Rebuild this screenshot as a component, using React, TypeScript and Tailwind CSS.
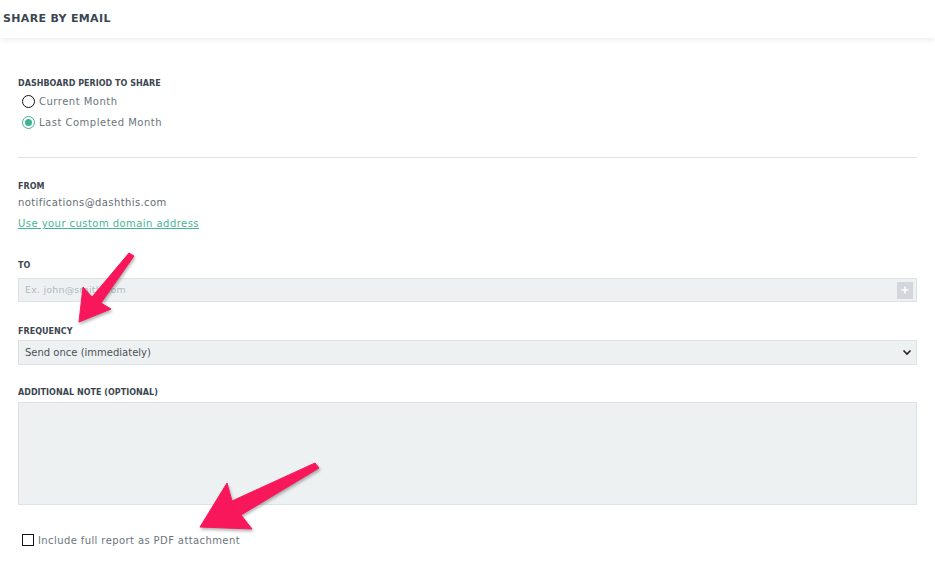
import React, { useState } from "react";

const font = { fontFamily: "'DejaVu Sans', sans-serif" };

const Label = ({ children, className = "" }: { children: React.ReactNode; className?: string }) => (
    <div className={`text-[8px] leading-[12px] font-bold tracking-[0.005em] text-[#3b4650] ${className}`}>
        {children}
    </div>
);

const Radio = ({ checked, label, onClick }: { checked: boolean; label: string; onClick: () => void }) => (
    <button onClick={onClick} className="flex items-center h-[21px] pl-[4px] gap-[4px] text-left">
        {checked ? (
            <span className="w-[13px] h-[13px] rounded-full border-[1.5px] border-[#3db595] flex items-center justify-center">
                <span className="w-[7px] h-[7px] rounded-full bg-[#3db595]" />
            </span>
        ) : (
            <span className="w-[13px] h-[13px] rounded-full border-[1.5px] border-[#111]" />
        )}
        <span className="text-[10px] tracking-[0.05em] text-[#6b757c]">{label}</span>
    </button>
);

const App: React.FC = () => {
    const [period, setPeriod] = useState<"current" | "last">("last");
    const [pdf, setPdf] = useState(false);

    return (
        <div className="w-[935px] h-[562px] bg-white relative overflow-hidden" style={font}>
            {/* Header */}
            <div className="h-[38px] flex items-center px-[3px] shadow-[0_2px_5px_rgba(0,0,0,0.07)] relative z-10">
                <h1 className="text-[11px] font-bold tracking-[0.03em] text-[#3a4752]">SHARE BY EMAIL</h1>
            </div>

            <div className="px-[18px] pt-[40px] flex flex-col">
                <Label>DASHBOARD PERIOD TO SHARE</Label>
                <div className="mt-[1px] flex flex-col">
                    <Radio checked={period === "current"} label="Current Month" onClick={() => setPeriod("current")} />
                    <Radio checked={period === "last"} label="Last Completed Month" onClick={() => setPeriod("last")} />
                </div>

                <hr className="mt-[24px] border-t border-[#dfe3e6]" />

                <Label className="mt-[23px]">FROM</Label>
                <div className="mt-[3px] text-[10px] leading-[14px] tracking-[0.04em] text-[#636d74]">
                    notifications@dashthis.com
                </div>
                <a href="#" className="mt-[7px] text-[10px] leading-[14px] tracking-[0.045em] text-[#45b597] underline self-start">
                    Use your custom domain address
                </a>

                <Label className="mt-[29px]">TO</Label>
                <div className="mt-[6px] h-[24px] bg-[#eef1f2] border border-[#dde2e5] flex items-center pl-[6px] pr-[3px]">
                    <input
                        placeholder="Ex. john@smith.com"
                        className="flex-1 bg-transparent outline-none text-[9.5px] tracking-[0.02em] text-[#555] placeholder:text-[#b3babf]"
                    />
                    <span className="w-[16px] h-[17px] bg-[#d3d6db] flex items-center justify-center">
                        <svg width="8" height="8" viewBox="0 0 8 8">
                            <path d="M4 0.5v7M0.5 4h7" stroke="#fff" strokeWidth="1.6" />
                        </svg>
                    </span>
                </div>

                <Label className="mt-[24px]">FREQUENCY</Label>
                <div className="mt-[2px] h-[25px] bg-[#eef1f2] border border-[#dde2e5] flex items-center pl-[6px] pr-[4px]">
                    <span className="flex-1 text-[10px] text-[#4a5259]">Send once (immediately)</span>
                    <svg width="10" height="7" viewBox="0 0 10 7">
                        <path d="M1.5 1.5l3.5 3.5 3.5-3.5" fill="none" stroke="#222" strokeWidth="1.6" />
                    </svg>
                </div>

                <Label className="mt-[22px]">ADDITIONAL NOTE (OPTIONAL)</Label>
                <textarea className="mt-[3px] h-[103px] bg-[#eef1f2] border border-[#dde2e5] resize-none outline-none text-[10px] p-[6px]" />

                <button onClick={() => setPdf(!pdf)} className="mt-[27px] h-[16px] flex items-center pl-[4px] gap-[4px] self-start">
                    <span className="w-[12px] h-[12px] border-[1.5px] border-[#111] flex items-center justify-center">
                        {pdf && <span className="w-[5px] h-[5px] bg-[#111]" />}
                    </span>
                    <span className="text-[10px] tracking-[0.04em] text-[#6b757c]">Include full report as PDF attachment</span>
                </button>
            </div>

            {/* Annotation arrows */}
            <svg className="absolute left-0 top-0 pointer-events-none drop-shadow-[1px_2px_1.5px_rgba(0,0,0,0.3)]" width="935" height="562">
                <polygon points="129,253 134,256 101,303 111,309 79,322 83,287 92,297" fill="#f8175b" strokeLinejoin="round" stroke="#f8175b" strokeWidth="1" />
                <polygon points="315,463 319,468 241,515 252,529 200,527 227,483 232,501" fill="#f8175b" strokeLinejoin="round" stroke="#f8175b" strokeWidth="1" />
            </svg>
        </div>
    );
};

export default App;
